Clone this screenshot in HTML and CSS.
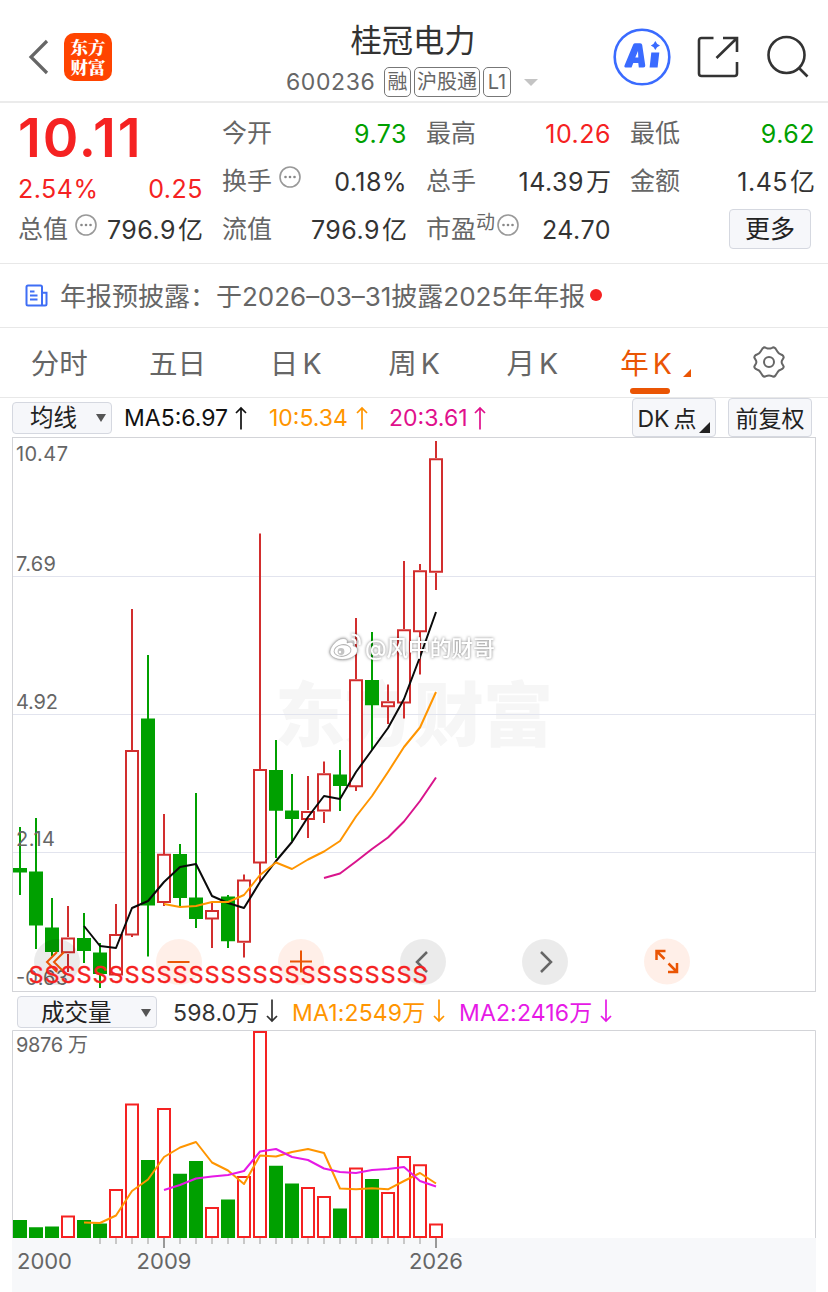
FILE: index.html
```html
<!DOCTYPE html>
<html lang="zh-CN">
<head>
<meta charset="utf-8">
<title>桂冠电力 600236</title>
<link rel="stylesheet" href="styles.css">
</head>
<body>
<header class="top">
  <svg class="back" width="22" height="36" viewBox="0 0 22 36"><path d="M19 2L3 18l16 16"/></svg>
  <div class="logo">东方<br>财富</div>
  <div class="title">
    <h1>桂冠电力</h1>
    <div class="code"><span class="num">600236</span><i class="tag t1">融</i><i class="tag t2">沪股通</i><i class="tag t3">L1</i><b class="down"></b></div>
  </div>
  <svg class="ai" width="58" height="58" viewBox="0 0 58 58">
    <circle cx="29" cy="29" r="27.3" fill="none" stroke="#3a6bff" stroke-width="2.6"/>
    <path fill="#3a6bff" fill-rule="evenodd" d="M20.2 16.500q.6-1.300 2-1.300h5q1.800 0 2 1.800l3 20q.3 2.500-2 2.500h-4.400l-.5-4.500h-5l-1.800 4.500h-6q-1.700 0-1-2zM22.300 29.500h3l-.3-6.500zM38.300 24.500h8l-1.700 15h-8zM42.300 13q1.200 3.200 4.700 4.500-3.500 1.400-4.700 4.500-1.100-3.100-4.500-4.500 3.400-1.300 4.500-4.500z"/>
  </svg>
  <svg class="share" width="42" height="42" viewBox="0 0 42 42"><path d="M16.500 2H4.500Q2 2 2 4.500v33Q2 40 4.500 40h33q2.500 0 2.500-2.500V26M19.500 22L39 3M26 2h14v14"/></svg>
  <svg class="search" width="44" height="44" viewBox="0 0 44 44"><circle cx="20.500" cy="20" r="18"/><path d="M33 33l8.500 8.500"/></svg>
</header>

<section class="quote">
  <div class="price">10.11</div>
  <div class="cell chg red"><span>2.54%</span><span>0.25</span></div>
  <div class="cell c13"><label>总值</label><svg class="dots"><use href="#more"/></svg><span>796.9<em>亿</em></span></div>
  <div class="cell"><label>今开</label><span class="green">9.73</span></div>
  <div class="cell"><label>换手</label><svg class="dots"><use href="#more"/></svg><span>0.18%</span></div>
  <div class="cell"><label>流值</label><span>796.9<em>亿</em></span></div>
  <div class="cell"><label>最高</label><span class="red">10.26</span></div>
  <div class="cell"><label>总手</label><span>14.39<em>万</em></span></div>
  <div class="cell"><label>市盈<sup>动</sup></label><svg class="dots tight"><use href="#more"/></svg><span>24.70</span></div>
  <div class="cell"><label>最低</label><span class="green">9.62</span></div>
  <div class="cell"><label>金额</label><span>1.45<em>亿</em></span></div>
  <div class="cell"><button class="btn more">更多</button></div>
</section>

<section class="notice">
  <svg width="23" height="23" viewBox="0 0 23 23"><path d="M17 21.500V3q0-1.500-1.500-1.500h-12.500Q1.500 1.500 1.500 3v17q0 1.500 1.500 1.500h17q1.500 0 1.500-1.500V8.800H17M5 7.500h4.500M5 11.500h7.500M5 15.500h7.500"/></svg>
  <p>年报预披露：于2026–03–31披露2025年年报</p><b class="dot"></b>
</section>

<nav class="tabs">
  <a>分时</a><a>五日</a><a>日<i>K</i></a><a>周<i>K</i></a><a>月<i>K</i></a><a class="on">年<i>K</i></a>
  <a class="gear"><svg width="34" height="34" viewBox="0 0 34 34"><circle cx="17" cy="17" r="5"/><path d="M10.500 3.500Q12 1.700 14 2.800Q17 4.300 20 2.800Q22 1.700 23.500 3.500L25.200 6.300Q26.500 8.800 29 9.500Q31.500 10.300 31.700 12.500Q31 14 30 15.500Q29.300 17 30 18.500L31.700 21.500Q31.700 23.500 29 24.500Q26.500 25.200 25.200 27.700L23.500 30.500Q22 32.300 20 31.200Q17 29.700 14 31.200Q12 32.300 10.500 30.500L8.800 27.700Q7.500 25.200 5 24.500Q2.300 23.500 2.300 21.500L4 18.500Q4.700 17 4 15.500L2.300 12.500Q2.500 10.300 5 9.500Q7.500 8.800 8.800 6.300Z"/></svg></a>
</nav>

<div class="bar ma">
  <button class="btn pick">均线<b></b></button>
  <span>MA5:6.97</span><svg class="arr"><use href="#up"/></svg>
  <span class="orange">10:5.34</span><svg class="arr orange"><use href="#up"/></svg>
  <span class="pink">20:3.61</span><svg class="arr pink"><use href="#up"/></svg>
  <button class="btn tall dk">DK<em>点</em><b></b></button>
  <button class="btn tall fq">前复权</button>
</div>

<svg class="kline" width="805" height="555" viewBox="12 437 805 555">
  <rect class="frame" x="12.500" y="437.500" width="803" height="554"/>
  <text class="brand" x="275" y="741" textLength="278">东方财富</text>
  <path class="grid" d="M13 576.500h802M13 714.500h802M13 852.500h802"/>
  <g class="axis">
    <text x="16" y="460.500" textLength="52">10.47</text>
    <text x="16" y="570.500" textLength="40">7.69</text>
    <text x="16" y="708.500" textLength="42">4.92</text>
  </g>

  <!-- falling years -->
  <path class="wick g" d="M20 827V895M36 818V949M52 898V956M84 913V963M100 943V988M148 655V956.500M180 844V907M196 793V928M228 895V948M276 740V858M292 774V841M340 750V811M372 632V750"/>
  <path class="body g" d="M13 868h14v4.500h-14zM29 871.500h14v54h-14zM45 927.500h14v24.500h-14zM77 938h14v13h-14zM93 952.500h14v21.500h-14zM141 718.500h14v187h-14zM173 854h14v44h-14zM189 897.500h14v21.500h-14zM221 896.500h14v44.800h-14zM269 770h14v40.700h-14zM285 810.500h14v8.500h-14zM333 774.500h14v11.500h-14zM365 680h14v25.300h-14z"/>
  <!-- rising years -->
  <path class="wick r" d="M68 906V937M68 954V972M116 904V934M132 609V750M132 935V937M164 814V854M164 902V906M212 902V910M212 919V948M244 874.500V880M244 943V957.500M260 533.500V769M260 863V882M308 776V810M308 820V838M324 761.500V773M324 812V823M356 618V679M356 787V791M388 684.500V701M388 707V724M404 561V629M404 703V718.500M420 564V570M420 632V674.500M436 441V458M436 573V590"/>
  <path class="body r" d="M62 938.500h12v13.800h-12zM110 935h12v39.500h-12zM126 751h12v183.500h-12zM158 854.700h12v47.300h-12zM206 911h12v7.500h-12zM238 880.500h12v61.300h-12zM254 770h12v92.500h-12zM302 812h12v7h-12zM318 774.300h12v36.300h-12zM350 680.300h12v106h-12zM382 702.300h12v4h-12zM398 630.300h12v72.300h-12zM414 571.200h12v60h-12zM430 459.300h12v112.500h-12z"/>

  <polyline class="line" stroke="#0a0a0a" points="84,926 100,946 116,948 132,908 148,901 164,882 180,867 196,864 212,896 228,903 244,908 260,882 276,861 292,842 308,817 324,796 340,799 356,772 372,750 388,728 404,699 420,657 436,612"/>
  <polyline class="line" stroke="#ff9500" points="164,904 180,907 196,906 212,902 228,902 244,895 260,875 276,862.500 292,869 308,859.500 324,851.500 340,841 356,816.500 372,796 388,772 404,747 420,727.500 436,692"/>
  <polyline class="line" stroke="#d9148c" points="324,878 340,873.500 356,861.500 372,849 388,837.500 404,821.500 420,801 436,777.500"/>

  <g class="axis">
    <text x="16" y="846" textLength="39">2.14</text>
    <text x="16" y="985" textLength="52">-0.63</text>
  </g>
  <g>
    <circle class="gray" cx="57" cy="962" r="23"/><circle class="peach" cx="179" cy="962" r="23"/><circle class="peach" cx="301" cy="962" r="23"/>
    <circle class="gray" cx="423" cy="962" r="23"/><circle class="gray" cx="545" cy="962" r="23"/><circle class="peach" cx="667" cy="961.500" r="23"/>
  </g>
  <path class="ctl o" d="M57 952L47 962l10 10M64 952L54 962l10 10M167.500 962h22M290 961.500h22M301 950.500v22"/>
  <path class="ctl thick" d="M427 952l-10 10 10 10M541 952l10 10-10 10"/>
  <path class="ctl o thick" d="M656.500 960V951H665.500M656.500 951l8 8M677 963v9h-9M677 972l-8.500-8.500"/>
  <text class="sell" y="982.800" x="36 52 68 84 100 116 132 148 164 180 196 212 228 244 260 276 292 308 324 340 356 372 388 404 420">SSSSSSSSSSSSSSSSSSSSSSSSS</text>

  <g class="weibo">
    <path fill="#fff" stroke="#aaa" stroke-width=".6" d="M343 638.500c-6 .5-13 8-13 13.500 0 4.500 6 7.500 12.500 7.500 9 0 15-5 15-9.500 0-3-3-4-4.500-4 1-3-1-5-6-3 1-3-1-4.500-4-4.500z"/>
    <ellipse cx="342.500" cy="650.500" rx="8.500" ry="5.800" transform="rotate(-8 342.500 650.500)" fill="#fff" stroke="#b5b5b5"/>
    <circle cx="341" cy="651.500" r="3.400" fill="#c4c4c4"/>
    <circle cx="340" cy="652" r="1.200" fill="#fff"/>
    <path d="M351.500 634.500q9.500 0 8 10.500M351.500 639q5 0 4 5" fill="none" stroke="#fff" stroke-width="2.200"/>
    <text x="365" y="656" textLength="130">@风中的财哥</text>
  </g>
</svg>

<div class="bar vol">
  <button class="btn pick">成交量<b></b></button>
  <span>598.0万</span><svg class="arr"><use href="#down"/></svg>
  <span class="orange">MA1:2549万</span><svg class="arr orange"><use href="#down"/></svg>
  <span class="magenta">MA2:2416万</span><svg class="arr magenta"><use href="#down"/></svg>
</div>

<svg class="volume" width="805" height="262" viewBox="12 1030 805 262">
  <path class="frame" d="M12.500 1238V1030.500H815.500V1238"/>
  <rect x="12" y="1238" width="804" height="54" fill="#f7f8fa"/>
  <g class="axis"><text x="16" y="1051.500" textLength="72">9876 万</text></g>
  <path class="body g" d="M13 1220h14v18h-14zM29 1227.300h14v10.700h-14zM45 1226.500h14v11.500h-14zM77 1220h14v18h-14zM93 1223.500h14v14.500h-14zM141 1160h14v78h-14zM173 1173.700h14v64.300h-14zM189 1161h14v77h-14zM221 1199.500h14v38.500h-14zM269 1165.700h14v72.300h-14zM285 1183.500h14v54.500h-14zM333 1208.500h14v29.500h-14zM365 1179h14v59h-14z"/>
  <path class="body r2" d="M62 1237v-20.500h12v20.500zM110 1237v-47h12v47zM126 1237v-132.500h12v132.500zM158 1237v-128h12v128zM206 1237v-29h12v29zM238 1237v-60h12v60zM254 1237v-205h12v205zM302 1237v-49h12v49zM318 1237v-40h12v40zM350 1237v-68.500h12v68.500zM382 1237v-44h12v44zM398 1237v-80h12v80zM414 1237v-71.700h12v71.700zM430 1237v-12.500h12v12.500z"/>
  <polyline class="line" stroke="#ff9500" points="84,1222.500 100,1223 116,1215.500 132,1191 148,1179.500 164,1157 180,1147.500 196,1142 212,1162.500 228,1170.500 244,1184 260,1155.500 276,1156.500 292,1152 308,1149 324,1153 340,1188.500 356,1189.300 372,1188.300 388,1189.300 404,1181 420,1173 436,1183.500"/>
  <polyline class="line" stroke="#e619e6" points="164,1190 180,1185 196,1178.500 212,1176.500 228,1175 244,1171 260,1151.500 276,1149 292,1157 308,1160 324,1168.500 340,1172 356,1173 372,1170 388,1169 404,1167 420,1181 436,1186.500"/>
  <path stroke="#c8c8c8" stroke-width="2" d="M100 1238v6M116 1238v6M132 1238v6M148 1238v6M180 1238v6M196 1238v6M212 1238v6M228 1238v6M244 1238v6M260 1238v6M276 1238v6M292 1238v6M308 1238v6M324 1238v6M340 1238v6M356 1238v6M372 1238v6M388 1238v6M404 1238v6M420 1238v6"/>
  <path stroke="#999" stroke-width="2" d="M164 1238v10M436 1238v10"/>
  <g class="years">
    <text x="17" y="1269" textLength="55">2000</text>
    <text x="136.500" y="1269" textLength="55">2009</text>
    <text x="409" y="1269" textLength="54">2026</text>
  </g>
</svg>

<svg class="defs" width="0" height="0">
  <symbol id="more" viewBox="0 0 22 22"><circle cx="11" cy="11" r="10" fill="none" stroke="#999" stroke-width="1.600"/><circle cx="6.500" cy="11" r="1.300" fill="#888"/><circle cx="11" cy="11" r="1.300" fill="#888"/><circle cx="15.500" cy="11" r="1.300" fill="#888"/></symbol>
  <symbol id="up" viewBox="0 0 12 24"><path d="M6 23.500V2M1 7l5-5 5 5" fill="none" stroke="currentColor" stroke-width="1.700"/></symbol>
  <symbol id="down" viewBox="0 0 12 24"><path d="M6 .5V22M1 17l5 5 5-5" fill="none" stroke="currentColor" stroke-width="1.700"/></symbol>
</svg>
</body>
</html>
```
FILE: styles.css
```css
* {
  box-sizing: border-box;
}
body {
  margin: 0;
  width: 828px;
  height: 1292px;
  overflow: hidden;
  background: #fff;
  color: #333;
  font-family: Inter, "Noto Sans CJK SC", sans-serif;
  font-weight: 400;
}
svg {
  display: block;
  flex: none;
}
i, em {
  font-style: normal;
}
.defs { position: absolute; }
.red { color: #f52222; }
.green { color: #00a000; }
.orange { color: #ff9500; }
.pink { color: #e0108c; }
.magenta { color: #e619e6; }

/* header */
.top {
  display: flex;
  height: 103px;
  border-bottom: 2px solid #ebebeb;
}
.back {
  margin: 39px 0 0 28px;
  fill: none;
  stroke: #666;
  stroke-width: 3.2;
}
.logo {
  width: 48px;
  height: 48px;
  margin: 33px 0 0 14px;
  padding-top: 4px;
  border-radius: 10px;
  background: #ff4400;
  color: #fff;
  font: 900 17.500px/19.500px "Noto Serif CJK SC", "Noto Sans CJK SC", sans-serif;
  text-align: center;
}
.title {
  width: 300px;
  margin-left: 151px;
}
h1 {
  margin: 18px 0 0;
  font-size: 31.300px;
  font-weight: 400;
  line-height: 46px;
  text-align: center;
}
.code {
  display: flex;
  align-items: center;
  height: 36px;
  margin-left: 23px;
  color: #666;
}
.num {
  width: 98px;
  font-size: 23px;
  letter-spacing: .6px;
}
.tag {
  height: 30px;
  margin-right: 3px;
  border: 1.500px solid #777;
  border-radius: 5px;
  font-size: 20px;
  line-height: 29px;
  text-align: center;
}
.t1 { width: 27px; }
.t2 { width: 66px; }
.t3 { width: 28px; }
.down {
  margin-left: 10px;
  border: 7px solid transparent;
  border-top-color: #c4c4c4;
  border-bottom: 0;
}
.ai { margin: 28px 0 0 50px; }
.share {
  margin: 36px 0 0 26px;
  fill: none;
  stroke: #333;
  stroke-width: 2.600;
}
.search {
  margin: 35px 0 0 27px;
  fill: none;
  stroke: #333;
  stroke-width: 2.600;
}

/* quote numbers */
.quote {
  display: grid;
  grid-auto-flow: column;
  grid-template-rows: repeat(3, 48px);
  grid-template-columns: repeat(4, 185px);
  column-gap: 19px;
  height: 161px;
  padding: 7px 0 0 18px;
  border-bottom: 1px solid #e8e8e8;
}
.price {
  color: #f52222;
  font-size: 54px;
  font-weight: 600;
  line-height: 55px;
  letter-spacing: 1.900px;
}
.cell {
  display: flex;
  align-items: center;
  justify-content: space-between;
  font-size: 25px;
  letter-spacing: .5px;
  line-height: 36px;
}
.cell > span {
  margin-left: auto;
  white-space: nowrap;
}
.cell.chg > span:first-child { margin-left: 0; }
.chg { padding-top: 13px; }
.cell em {
  margin-left: 2px;
  letter-spacing: 0;
}
label {
  margin-top: -2px;
  color: #666;
  font-size: 25px;
  letter-spacing: 0;
  white-space: nowrap;
}
sup {
  font-size: 19px;
  line-height: 1;
  vertical-align: 9px;
}
.dots {
  width: 22px;
  height: 22px;
  margin: 0 0 10px 7px;
}
.dots.tight { margin-left: 2px; }
.btn {
  padding: 0;
  border: 1px solid #d5d8e0;
  border-radius: 4px;
  background: #f6f7fa;
  color: #222;
  font-family: inherit;
  font-size: 25px;
  line-height: 1;
}
.more {
  width: 82px;
  height: 40px;
  margin: -3px 4px 0 auto;
  padding-top: 2px;
}

/* report notice */
.notice {
  display: flex;
  align-items: center;
  height: 64px;
  padding-left: 25px;
  border-bottom: 1px solid #e8e8e8;
  color: #666;
}
.notice svg {
  margin-top: -1px;
  fill: none;
  stroke: #3f6ef5;
  stroke-width: 2;
}
.notice p {
  width: 524px;
  margin: -3px 0 0 12px;
  font-size: 26px;
  white-space: nowrap;
}
.dot {
  width: 12px;
  height: 12px;
  margin: -1px 0 0 6px;
  border-radius: 50%;
  background: #f52222;
}

/* period tabs */
.tabs {
  display: grid;
  grid-template-columns: repeat(7, 1fr);
  height: 70px;
  border-bottom: 1px solid #e8e8e8;
}
.tabs a {
  position: relative;
  color: #666;
  font-size: 28.500px;
  line-height: 71px;
  text-align: center;
}
.tabs i { margin-left: 4px; }
.tabs .on {
  padding-right: 9px;
  color: #ea5504;
}
.on::before {
  content: "";
  position: absolute;
  left: 39px;
  bottom: 5px;
  width: 40px;
  height: 6px;
  border-radius: 3px;
  background: #ea5504;
}
.on::after {
  content: "";
  position: absolute;
  left: 92px;
  top: 41px;
  border-left: 8px solid transparent;
  border-bottom: 8px solid #ea5504;
}
.gear svg {
  margin: 17px 0 0 42px;
  fill: none;
  stroke: #666;
  stroke-width: 2;
}

/* indicator rows */
.bar {
  display: grid;
  align-items: center;
  font-size: 23px;
  white-space: nowrap;
}
.ma {
  grid-template-columns: 112px 111px 34px 87px 33px 85px 158px 96px 84px;
  height: 39px;
  padding-left: 12px;
  color: #111;
}
.vol {
  grid-template-columns: 156px 93px 26px 141px 26px 141px 20px;
  height: 38px;
  padding-left: 17px;
}
.vol span { letter-spacing: .15px; }
.arr {
  width: 12px;
  height: 24px;
}
.pick {
  display: flex;
  align-items: center;
  justify-content: space-between;
  width: 100px;
  height: 32px;
  padding: 1px 5px 0 17px;
  font-size: 23.500px;
}
.vol .pick {
  width: 140px;
  margin-top: 2px;
  padding-left: 23px;
}
.pick b {
  border: 5px solid transparent;
  border-top: 8px solid #555;
  border-bottom: 0;
}
.tall {
  position: relative;
  height: 39px;
  width: 84px;
  padding-top: 3px;
  font-size: 23px;
}
.dk { padding-right: 14px; }
.dk em { margin-left: 4px; }
.dk b {
  position: absolute;
  right: 5px;
  bottom: 3px;
  border-left: 11px solid transparent;
  border-bottom: 11px solid #222;
}

/* charts */
.kline, .volume {
  margin-left: 12px;
}
.frame {
  fill: none;
  stroke: #d3d4d8;
}
.grid { stroke: #e2e4ee; }
.brand {
  fill: #f6f6f6;
  font-size: 70px;
  font-weight: 900;
}
.axis text {
  fill: #666;
  font-size: 20px;
}
.years text {
  fill: #666;
  font-size: 22px;
}
.wick { stroke-width: 2; }
.wick.g { stroke: #00a000; }
.wick.r { stroke: #d22e2e; }
.body.g { fill: #00a000; }
.body.r {
  fill: #fff;
  stroke: #d22e2e;
  stroke-width: 2;
}
.body.r2 {
  fill: #fff;
  stroke: #f52222;
  stroke-width: 2;
}
.line {
  fill: none;
  stroke-width: 2;
  stroke-linejoin: round;
}
.sell {
  fill: #f52222;
  stroke: #f52222;
  stroke-width: .3;
  font-size: 23.500px;
  text-anchor: middle;
}
.gray {
  fill: #000;
  fill-opacity: .08;
}
.peach {
  fill: #ff6420;
  fill-opacity: .1;
}
.ctl {
  fill: none;
  stroke: #666;
  stroke-width: 2;
}
.ctl.thick { stroke-width: 2.500; }
.ctl.o { stroke: #ea5504; }
.weibo {
  filter: drop-shadow(0 0 1.500px rgba(0, 0, 0, .5));
}
.weibo text {
  fill: #fff;
  font-size: 22px;
  font-weight: 500;
}
```
